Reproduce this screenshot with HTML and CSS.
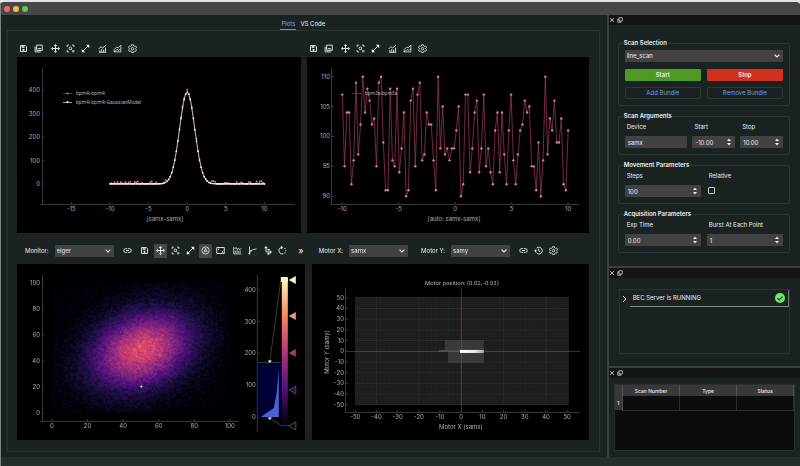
FILE: index.html
```
<!DOCTYPE html>
<html lang="en">
<head>
    <meta charset="utf-8">
    <meta name="viewport" content="width=device-width, initial-scale=1">
    <title>BEC</title>
    <link rel="stylesheet" href="styles.css">
</head>
<body>
<!-- Icon sprite -->
<svg class="sprite" aria-hidden="true">
    <symbol id="i-save" viewBox="0 0 24 24"><path d="M4 4h13l3 3v13H4z" fill="none" stroke="currentColor" stroke-width="2.4"/><path d="M7 6h8v4H7zM12 12.500a3 3 0 1 1 0 6 3 3 0 0 1 0-6z" fill="currentColor"/></symbol>
    <symbol id="i-copy" viewBox="0 0 24 24"><path d="M7 3h15v14H7zM3 7v14h15" fill="none" stroke="currentColor" stroke-width="2.400"/><path d="M10 11h9v3h-9z" fill="currentColor"/></symbol>
    <symbol id="i-move" viewBox="0 0 24 24"><path d="M12 4v16M4 12h16" stroke="currentColor" stroke-width="2.600"/><path d="M12 0l4.500 5h-9zM12 24l4.500-5h-9zM0 12l5-4.500v9zM24 12l-5-4.500v9z" fill="currentColor"/></symbol>
    <symbol id="i-focus" viewBox="0 0 24 24"><path d="M3 8V3h5M16 3h5v5M21 16v5h-5M8 21H3v-5M14 14l4 4" fill="none" stroke="currentColor" stroke-width="2.200"/><circle cx="11.500" cy="11.500" r="3.500" fill="none" stroke="currentColor" stroke-width="2.200"/></symbol>
    <symbol id="i-expand" viewBox="0 0 24 24"><path d="M5 19L19 5" stroke="currentColor" stroke-width="2.400"/><path d="M13 2h9v9zM2 13v9h9z" fill="currentColor"/></symbol>
    <symbol id="i-stats" viewBox="0 0 24 24"><path d="M2 13l6-6 4 4 9-8M3 22h19M5 21v-5M10 21v-7M15 21v-6M20 21V10" fill="none" stroke="currentColor" stroke-width="2.400"/></symbol>
    <symbol id="i-area" viewBox="0 0 24 24"><path d="M3 21V15l7-7 4 2 7-7v18zM3 21l8-6 4 2 6-4" fill="none" stroke="currentColor" stroke-width="2"/></symbol>
    <symbol id="i-gear" viewBox="0 0 24 24"><path d="M9.500 2h5l.6 3 2.200 1.300 3-1 2.400 4.300-2.300 2v1.800l2.300 2-2.400 4.300-3-1L15.100 20l-.6 3h-5l-.6-3-2.200-1.300-3 1-2.400-4.300 2.300-2v-1.800l-2.300-2 2.400-4.300 3 1L8.900 5z" fill="none" stroke="currentColor" stroke-width="2.200"/><circle cx="12" cy="12.500" r="3.300" fill="none" stroke="currentColor" stroke-width="2.200"/></symbol>
    <symbol id="i-link" viewBox="0 0 24 24"><path d="M11 7H7a5 5 0 0 0 0 10h4M13 7h4a5 5 0 0 1 0 10h-4M8 12h8" fill="none" stroke="currentColor" stroke-width="2.400"/></symbol>
    <symbol id="i-auto" viewBox="0 0 24 24"><circle cx="12" cy="12" r="9.500" fill="none" stroke="currentColor" stroke-width="2"/><path d="M8 17l4-11 4 11M9.500 13.500h5" fill="none" stroke="currentColor" stroke-width="2"/></symbol>
    <symbol id="i-aspect" viewBox="0 0 24 24"><path d="M2 4h20v16H2z" fill="none" stroke="currentColor" stroke-width="2.400"/><path d="M5 12V7h5zM19 12v5h-5z" fill="currentColor"/></symbol>
    <symbol id="i-fft" viewBox="0 0 24 24"><path d="M2 3v18h20M4 8l4-4 3 5 4-3 3 4 4-4M7 18v-5M11 18v-7M15 18v-4M19 18v-6" fill="none" stroke="currentColor" stroke-width="2.200"/></symbol>
    <symbol id="i-log" viewBox="0 0 24 24"><path d="M4 1v22M1 20h5M4 20c2-8 7-11 19-12M4 13h7" fill="none" stroke="currentColor" stroke-width="2.200"/></symbol>
    <symbol id="i-transpose" viewBox="0 0 24 24"><path d="M8 4v12h10" fill="none" stroke="currentColor" stroke-width="2.400"/><path d="M8 0l5 6H3zM24 16l-6-5v10zM12 8h6v4h-6zM12 18h5v5h-5z" fill="currentColor"/></symbol>
    <symbol id="i-rotate" viewBox="0 0 24 24"><path d="M9 4a8.500 8.500 0 1 0 5 16.500M9 0v8" fill="none" stroke="currentColor" stroke-width="2.400"/><path d="M9 0l5 4-5 4zM17 5h3v3h-3zM19 11h3v3h-3zM17 17h3v3h-3z" fill="currentColor"/></symbol>
    <symbol id="i-history" viewBox="0 0 24 24"><path d="M4 13a9 9 0 1 0 3-7.500M12.500 7v6l4 2" fill="none" stroke="currentColor" stroke-width="2.400"/><path d="M0 10h8l-4 5z" fill="currentColor"/></symbol>
    <symbol id="i-close" viewBox="0 0 24 24"><path d="M4 4l16 16M20 4L4 20" stroke="currentColor" stroke-width="3"/></symbol>
    <symbol id="i-float" viewBox="0 0 24 24"><path d="M8 3h13v13H8zM8 8H3v13h13v-5" fill="none" stroke="currentColor" stroke-width="2.600"/></symbol>
</svg>

<div class="window">
    <header class="titlebar">
        <span class="light red"></span>
        <span class="light yellow"></span>
        <span class="light green"></span>
    </header>

    <div class="workspace">
        <!-- Plots -->
        <main class="main">
            <nav class="tabs">
                <button class="tab active">Plots</button>
                <button class="tab">VS Code</button>
            </nav>
            <div class="pane">
                <div class="plot-row top">
                    <section class="plot">
                        <div class="toolbar">
                            <button class="tool" aria-label="Save"><svg><use href="#i-save"/></svg></button>
                            <button class="tool" aria-label="Copy"><svg><use href="#i-copy"/></svg></button>
                            <button class="tool sep" aria-label="Drag"><svg><use href="#i-move"/></svg></button>
                            <button class="tool" aria-label="Zoom"><svg><use href="#i-focus"/></svg></button>
                            <button class="tool" aria-label="Auto range"><svg><use href="#i-expand"/></svg></button>
                            <button class="tool sep" aria-label="Curves"><svg><use href="#i-stats"/></svg></button>
                            <button class="tool" aria-label="Fit"><svg><use href="#i-area"/></svg></button>
                            <button class="tool" aria-label="Settings"><svg><use href="#i-gear"/></svg></button>
                        </div>
                        <svg class="canvas" id="gauss" viewBox="0 0 284 176">
                            <path class="axis" d="M25.500 11V147.500M23 147.500H278"/>
                            <g class="data"></g>
                            <g class="legend">
                                <path class="pink" d="M46 36.500h9"/><circle class="pink-dot" cx="50.500" cy="36.500" r="1"/>
                                <path class="white" d="M46 45.500h9"/><circle class="white-dot" cx="50.500" cy="45" r="1"/>
                                <text x="59" y="38">bpm4i-bpm4i</text>
                                <text x="59" y="47">bpm4i-bpm4i-GaussianModel</text>
                            </g>
                            <text class="caption" x="148" y="164">[samx-samx]</text>
                        </svg>
                    </section>
                    <section class="plot">
                        <div class="toolbar">
                            <button class="tool" aria-label="Save"><svg><use href="#i-save"/></svg></button>
                            <button class="tool" aria-label="Copy"><svg><use href="#i-copy"/></svg></button>
                            <button class="tool sep" aria-label="Drag"><svg><use href="#i-move"/></svg></button>
                            <button class="tool" aria-label="Zoom"><svg><use href="#i-focus"/></svg></button>
                            <button class="tool" aria-label="Auto range"><svg><use href="#i-expand"/></svg></button>
                            <button class="tool sep" aria-label="Curves"><svg><use href="#i-stats"/></svg></button>
                            <button class="tool" aria-label="Fit"><svg><use href="#i-area"/></svg></button>
                            <button class="tool" aria-label="Settings"><svg><use href="#i-gear"/></svg></button>
                        </div>
                        <svg class="canvas" id="noise" viewBox="0 0 282 176">
                            <path class="axis" d="M24.500 11V147.500M23 147.500H272"/>
                            <g class="data"></g>
                            <g class="legend">
                                <path class="pink" d="M45 36.500h9"/>
                                <text x="58" y="38">bpm3a-bpm3a</text>
                            </g>
                            <text class="caption" x="147" y="164">[auto: samx-samx]</text>
                        </svg>
                    </section>
                </div>

                <div class="plot-row bottom">
                    <section class="plot">
                        <div class="toolbar">
                            <label class="tool-label" for="monitor">Monitor:</label>
                            <select id="monitor" class="combo"><option>eiger</option></select>
                            <button class="tool sep" aria-label="Connect"><svg><use href="#i-link"/></svg></button>
                            <button class="tool sep" aria-label="Save"><svg><use href="#i-save"/></svg></button>
                            <button class="tool sep on" aria-label="Drag"><svg><use href="#i-move"/></svg></button>
                            <button class="tool" aria-label="Zoom"><svg><use href="#i-focus"/></svg></button>
                            <button class="tool" aria-label="Auto range"><svg><use href="#i-expand"/></svg></button>
                            <button class="tool on" aria-label="Auto levels"><svg><use href="#i-auto"/></svg></button>
                            <button class="tool" aria-label="Lock aspect"><svg><use href="#i-aspect"/></svg></button>
                            <button class="tool sep" aria-label="FFT"><svg><use href="#i-fft"/></svg></button>
                            <button class="tool" aria-label="Log scale"><svg><use href="#i-log"/></svg></button>
                            <button class="tool" aria-label="Transpose"><svg><use href="#i-transpose"/></svg></button>
                            <button class="tool" aria-label="Rotate"><svg><use href="#i-rotate"/></svg></button>
                            <button class="tool more" aria-label="More">»</button>
                        </div>
                        <svg class="canvas" id="image" viewBox="0 0 288 176">
                            <defs>
                                <linearGradient id="magma" x1="0" y1="0" x2="0" y2="1">
                                    <stop offset="0" stop-color="#fcfdbf"/>
                                    <stop offset=".25" stop-color="#fc8961"/>
                                    <stop offset=".5" stop-color="#b73779"/>
                                    <stop offset=".75" stop-color="#51127c"/>
                                    <stop offset="1" stop-color="#000004"/>
                                </linearGradient>
                            </defs>
                            <foreignObject x="35" y="19" width="178" height="130"><canvas id="heatmap" class="heatmap" width="100" height="100"></canvas></foreignObject>
                            <circle cx="124.500" cy="122.500" r="1" fill="#fff"/>
                            <path class="axis" d="M25.500 11V157.500M23 157.500H222M240.500 11V168"/>
                            <g class="data"></g>
                            <!-- Histogram and level handles -->
                            <path d="M241 98h23v55h-23z" fill="#000038"/>
                            <path d="M241 98.500h23" stroke="#33413c"/>
                            <path d="M244 153l7-5 6-4 3-16 2-24v49z" fill="#4f5fd6"/>
                            <path d="M253 97l11-81" stroke="#6b6644" stroke-width=".6"/>
                            <path d="M253 154l11 7.500h8" stroke="#686b4d" stroke-width=".6" fill="none"/>
                            <path d="M251 96.500h4l-2 2.500zM251 153.500h4l-2 2.500z" fill="#fff"/>
                            <path d="M265 14h6v147h-6z" fill="url(#magma)"/>
                            <path d="M264 13h7v5h-7z" fill="#fbf8c4"/>
                            <path d="M279 12v8l-7-4z" fill="#fcf6bd"/>
                            <path d="M279 48v8l-7-4z" fill="#ef9a78"/>
                            <path d="M279 85v8l-7-4z" fill="#a63d6e"/>
                            <path d="M279 122v8l-7-4z" fill="#2e1248" stroke="#69508a" stroke-width=".7"/>
                            <path d="M279 158v8l-7-4z" fill="#000" stroke="#777" stroke-width=".7"/>
                        </svg>
                    </section>
                    <section class="plot">
                        <div class="toolbar motors">
                            <label class="tool-label" for="motor-x">Motor X:</label>
                            <select id="motor-x" class="combo"><option>samx</option></select>
                            <label class="tool-label second" for="motor-y">Motor Y:</label>
                            <select id="motor-y" class="combo"><option>samy</option></select>
                            <button class="tool sep" aria-label="Connect"><svg><use href="#i-link"/></svg></button>
                            <button class="tool" aria-label="History"><svg><use href="#i-history"/></svg></button>
                            <button class="tool" aria-label="Settings"><svg><use href="#i-gear"/></svg></button>
                        </div>
                        <svg class="canvas" id="motor" viewBox="0 0 277 176">
                            <defs>
                                <linearGradient id="trace"><stop offset="0" stop-color="#fff"/><stop offset=".6" stop-color="#eee"/><stop offset="1" stop-color="#aaa"/></linearGradient>
                            </defs>
                            <path d="M43 33h214v108H43z" fill="#1b1c1c"/>
                            <g class="grid"></g>
                            <path d="M133 76h39v23h-36V88h-3z" fill="#3c403f" opacity=".85"/>
                            <path d="M127 86h22v2h-22z" fill="#4b4b4b"/>
                            <path class="cross" d="M149.500 25V148M33 87.500H268"/>
                            <path d="M148 86h24v3h-24z" fill="url(#trace)"/>
                            <path class="axis" d="M33.500 25V148.500M33 148.500H268"/>
                            <g class="data"></g>
                            <text class="title" x="150" y="21">Motor position: (0.02, -0.03)</text>
                            <text class="caption" x="149" y="165">Motor X (samx)</text>
                            <text class="caption" transform="translate(17 88) rotate(-90)">Motor Y (samy)</text>
                        </svg>
                    </section>
                </div>
            </div>
        </main>

        <!-- Docks -->
        <aside class="docks">
            <section class="dock">
                <div class="dock-bar">
                    <button class="dock-btn" aria-label="Close"><svg><use href="#i-close"/></svg></button>
                    <button class="dock-btn" aria-label="Float"><svg><use href="#i-float"/></svg></button>
                </div>
                <form class="scan">
                    <fieldset>
                        <legend>Scan Selection</legend>
                        <select class="combo wide" aria-label="Scan"><option>line_scan</option></select>
                        <div class="pair actions">
                            <button type="button" class="btn start">Start</button>
                            <button type="button" class="btn stop">Stop</button>
                        </div>
                        <div class="pair bundle">
                            <button type="button" class="btn outline">Add Bundle</button>
                            <button type="button" class="btn outline">Remove Bundle</button>
                        </div>
                    </fieldset>
                    <fieldset>
                        <legend>Scan Arguments</legend>
                        <div class="args">
                            <div class="field"><label for="device">Device</label><input id="device" type="text" value="samx"></div>
                            <div class="field"><label for="start">Start</label><input id="start" type="number" step="0.01" value="-10.00"></div>
                            <div class="field"><label for="stop">Stop</label><input id="stop" type="number" step="0.01" value="10.00"></div>
                        </div>
                    </fieldset>
                    <fieldset>
                        <legend>Movement Parameters</legend>
                        <div class="pair">
                            <div class="field"><label for="steps">Steps</label><input id="steps" type="number" value="100"></div>
                            <div class="field"><label for="relative">Relative</label><input id="relative" type="checkbox"></div>
                        </div>
                    </fieldset>
                    <fieldset>
                        <legend>Acquisition Parameters</legend>
                        <div class="pair">
                            <div class="field"><label for="exp">Exp Time</label><input id="exp" type="number" step="0.01" value="0.00"></div>
                            <div class="field"><label for="burst">Burst At Each Point</label><input id="burst" type="number" value="1"></div>
                        </div>
                    </fieldset>
                </form>
            </section>

            <section class="dock">
                <div class="dock-bar">
                    <button class="dock-btn" aria-label="Close"><svg><use href="#i-close"/></svg></button>
                    <button class="dock-btn" aria-label="Float"><svg><use href="#i-float"/></svg></button>
                </div>
                <div class="status-list">
                    <div class="status-item">
                        <svg class="chevron" viewBox="0 0 6 8"><path d="M1 1l3 3-3 3"/></svg>
                        <div class="status-text">
                            <span>BEC Server is RUNNING</span>
                            <svg class="check" viewBox="0 0 24 24"><circle cx="12" cy="12" r="12" fill="#6ee86a"/><path d="M6 12.500l4 4 8-8" fill="none" stroke="#14301a" stroke-width="2.600"/></svg>
                        </div>
                    </div>
                </div>
            </section>

            <section class="dock last">
                <div class="dock-bar">
                    <button class="dock-btn" aria-label="Close"><svg><use href="#i-close"/></svg></button>
                    <button class="dock-btn" aria-label="Float"><svg><use href="#i-float"/></svg></button>
                </div>
                <div class="queue">
                    <table>
                        <thead>
                            <tr><th class="num"></th><th>Scan Number</th><th>Type</th><th>Status</th></tr>
                        </thead>
                        <tbody>
                            <tr><th class="num">1</th><td></td><td></td><td></td></tr>
                        </tbody>
                    </table>
                </div>
            </section>
        </aside>
    </div>
    <footer class="statusbar"></footer>
</div>

<script src="plots.js"></script>
</body>
</html>
```
FILE: styles.css
```
* {
    box-sizing: border-box;
}
body {
    margin: 0;
    background: #dfe3e4;
    font-family: Inter, "Liberation Sans", sans-serif;
    font-size: 6px;
    line-height: 8px;
    color: #eceeee;
}
button, input, select {
    font: inherit;
    color: inherit;
    margin: 0;
}
button {
    padding: 0;
    border: none;
    background: none;
    cursor: pointer;
}
.sprite {
    display: none;
}

/* Window */
.window {
    min-height: 100vh;
    display: flex;
    flex-direction: column;
    background: #1b2222;
    border-top: 2px solid #dfe3e4;
    border-left: 1px solid #7b8484;
    border-radius: 5px 5px 0 0;
    overflow: hidden;
}
.titlebar {
    display: flex;
    align-items: center;
    gap: 3px;
    height: 13px;
    padding-left: 3px;
    background: #474747;
}
.light {
    width: 6px;
    height: 6px;
    border-radius: 50%;
}
.light.red { background: #ee6a5f; }
.light.yellow { background: #f5bd4f; }
.light.green { background: #61c454; }
.workspace {
    flex: 1;
    display: flex;
}
.statusbar {
    height: 9px;
    background: #242c2c;
}

/* Tabs */
.main {
    flex: 1;
    padding: 5px 7px 5px 6px;
}
.tabs {
    display: flex;
    justify-content: center;
    gap: 3px;
}
.tab {
    padding: 0 1px 1px;
    border-bottom: 1px solid transparent;
}
.tab.active {
    color: #7aa7e8;
    border-bottom-color: #6d95cf;
}
.pane {
    border: 1px solid #2a3333;
    padding: 10px 10px 11px 9px;
}

/* Plots */
.plot-row {
    display: grid;
}
.plot-row.top {
    grid-template-columns: 284fr 282fr;
    gap: 6px;
}
.plot-row.bottom {
    grid-template-columns: 288fr 277fr;
    gap: 7px;
    margin-top: 11px;
}
.toolbar {
    display: flex;
    align-items: center;
    gap: 2px;
    height: 14px;
    margin-bottom: 2px;
}
.bottom .toolbar {
    margin-bottom: 6px;
    padding-left: 8px;
}
.bottom .motors {
    padding-left: 7px;
}
.tool {
    display: flex;
    align-items: center;
    justify-content: center;
    width: 13px;
    height: 14px;
    color: #eceeee;
}
.tool svg {
    width: 9px;
    height: 9px;
}
.tool.sep {
    margin-left: 2px;
}
.tool.sep.on {
    margin-left: 1px;
}
.tool.on {
    background: #46494a;
    border-radius: 1px;
}
.tool.more {
    margin-left: auto;
    width: 8px;
    font-size: 9px;
}
.tool-label {
    margin-right: 4px;
}
.tool-label.second {
    margin-left: 8px;
}
.combo {
    appearance: none;
    width: 59px;
    height: 12px;
    margin-right: 3px;
    padding: 0 2px;
    border: none;
    border-radius: 1px;
    background: #404243 url("data:image/svg+xml,%3Csvg xmlns='http://www.w3.org/2000/svg' viewBox='0 0 6 4'%3E%3Cpath d='M.6.6L3 3 5.400.6' fill='none' stroke='%23eee' stroke-width='1.100'/%3E%3C/svg%3E") no-repeat right 3px center / 6px 4px;
}
.combo.wide {
    display: block;
    width: 100%;
    margin: 0;
}
.canvas {
    display: block;
    width: 100%;
    height: auto;
    background: #000;
}
.heatmap {
    display: block;
    width: 178px;
    height: 130px;
}
.canvas text {
    font-size: 6px;
    fill: #adadad;
}
.canvas .legend text {
    font-family: Roboto, sans-serif;
    font-size: 5px;
}
.canvas .title {
    font-family: Roboto, sans-serif;
    text-anchor: middle;
}
.canvas .caption, .canvas .tick-x {
    text-anchor: middle;
}
.canvas .tick-y {
    text-anchor: end;
}
.axis {
    fill: none;
    stroke: #3c3c3c;
}
.pink, .white {
    fill: none;
    stroke: #a63a63;
    stroke-width: .7;
}
.white {
    stroke: #eee;
}
.pink-dot {
    fill: #d0809b;
}
.white-dot {
    fill: #fff;
}
.cross {
    stroke: #b4392f;
    stroke-width: .6;
}
.minor, .major {
    stroke: #252727;
    stroke-width: .5;
}
.major {
    stroke: #363838;
}

/* Docks */
.docks {
    display: flex;
    flex-direction: column;
    width: 24.200%;
    border-left: 2px solid #3a4141;
}
.dock {
    border-bottom: 2px solid #3a4141;
}
.dock.last {
    flex: 1;
    display: flex;
    flex-direction: column;
    border-bottom: none;
}
.dock-bar {
    display: flex;
    align-items: center;
    gap: 2px;
    height: 10px;
    background: #121416;
}
.dock-btn {
    display: flex;
    width: 6px;
    height: 6px;
}
.dock-btn svg {
    width: 6px;
    height: 6px;
}

/* Scan form */
.scan {
    display: grid;
    gap: 6px;
    padding: 14px 10px 13px 9px;
}
fieldset {
    min-width: 0;
    margin: 0;
    padding: 3px 6px 6px;
    border: 1px solid #2d3636;
    border-radius: 2px;
}
legend {
    margin-left: -2px;
    padding: 0 1px;
    font-weight: 600;
}
.pair {
    display: grid;
    grid-template-columns: 1fr 1fr;
    gap: 6px;
}
.pair.actions {
    margin: 7px 0 6px;
}
.args {
    display: grid;
    grid-template-columns: 63fr 43fr 43fr;
    gap: 5px;
}
.field {
    display: flex;
    flex-direction: column;
    gap: 5px;
}
.field label {
    padding-left: 2px;
}
.field input {
    appearance: none;
    width: 100%;
    height: 12px;
    padding: 0 3px;
    border: none;
    border-radius: 1px;
    background: #404243;
}
.field input[type="number"] {
    background: #404243 url("data:image/svg+xml,%3Csvg xmlns='http://www.w3.org/2000/svg' viewBox='0 0 4 8'%3E%3Cpath d='M0 3L2 .5 4 3zM0 5h4L2 7.500z' fill='%23eee'/%3E%3C/svg%3E") no-repeat right 4px center / 4px 8px;
}
.field input::-webkit-inner-spin-button {
    appearance: none;
}
.field input[type="checkbox"] {
    width: 7px;
    height: 7px;
    margin: 2px 0 0 1px;
    padding: 0;
    border: 1px solid #c9cccc;
    background: none;
}
.btn {
    height: 12px;
    border-radius: 1px;
}
.btn.start {
    background: #4e9a22;
    font-weight: 600;
}
.btn.stop {
    background: #d0301c;
    font-weight: 600;
}
.btn.outline {
    border: 1px solid #2f3839;
    color: #6f9fdc;
}

/* Service status */
.status-list {
    min-height: 65px;
    margin: 11px 10px 12px 10px;
    border: 1px solid #2a3333;
}
.status-item {
    display: flex;
    align-items: center;
}
.chevron {
    width: 6px;
    height: 8px;
    margin-left: 2px;
    fill: none;
    stroke: #e4e6e6;
}
.status-text {
    flex: 1;
    display: flex;
    align-items: center;
    justify-content: space-between;
    height: 17px;
    margin-left: 2px;
    padding: 0 3px;
    border-right: 1px solid #6c776f;
    border-bottom: 1px solid #7f8c82;
}
.check {
    width: 10px;
    height: 10px;
}

/* Scan queue */
.queue {
    flex: 1;
    margin: 6px 5px;
    background: #0b0c10;
    border: 1px solid #2a2f30;
}
.queue table {
    width: 100%;
    table-layout: fixed;
    border-collapse: collapse;
}
.queue th {
    height: 11px;
    padding: 0;
    background: #37383a;
    border-right: 1px solid #505254;
    font-size: 5px;
    font-weight: 500;
}
.queue td {
    height: 14px;
    border-right: 1px solid #2b2d30;
    border-bottom: 1px solid #2b2d30;
}
.queue .num {
    width: 8px;
}
```
FILE: plots.js
```
const NS = 'http://www.w3.org/2000/svg';

function add(parent, tag, attrs, text) {
    const el = document.createElementNS(NS, tag);
    for (const key in attrs) el.setAttribute(key, attrs[key]);
    if (text !== undefined) el.textContent = text;
    parent.appendChild(el);
    return el;
}

function ticksX(id, values, scale, y) {
    const g = document.querySelector(id + ' .data');
    values.forEach(v => {
        add(g, 'text', { class: 'tick-x', x: scale(v), y: y + 7 }, v);
        add(g, 'path', { class: 'axis', d: `M${scale(v)} ${y - 2}v2` });
    });
}

function ticksY(id, values, scale, x) {
    const g = document.querySelector(id + ' .data');
    values.forEach(v => {
        add(g, 'text', { class: 'tick-y', x: x - 2, y: scale(v) + 2 }, v);
        add(g, 'path', { class: 'axis', d: `M${x} ${scale(v)}h2` });
    });
}

function curve(id, points, name, r) {
    const g = document.querySelector(id + ' .data');
    add(g, 'polyline', { class: name, points: points.map(p => p.join()).join(' ') });
    points.forEach(p => add(g, 'circle', { class: name + '-dot', cx: p[0], cy: p[1], r: r }));
}

// Seeded generator, so the noise is the same on every load
let seed = 7;
function random() {
    seed = (seed * 16807) % 2147483647;
    return seed / 2147483647;
}

// bpm4i with its Gaussian fit
const gx = v => 170.3 + v * 7.73;
const gy = v => 127 - v * 0.234;
const measured = [];
const fit = [];
for (let i = 0; i <= 100; i++) {
    const x = -10 + i * 0.2;
    const y = 392 * Math.exp(-x * x / 1.9);
    fit.push([gx(x), gy(y)]);
    measured.push([gx(x), gy(y + (random() > 0.55 ? random() * 12 : 0))]);
}
curve('#gauss', measured, 'pink', 0.9);
curve('#gauss', fit, 'white', 0.8);
ticksX('#gauss', [-15, -10, -5, 0, 5, 10], gx, 147);
ticksY('#gauss', [0, 100, 200, 300, 400], gy, 25);

// bpm3a
const bpm3a = [
    107, 95, 104, 104, 92, 96, 109, 97, 102, 110, 104, 108, 106, 102, 103, 95, 109, 110, 99, 91,
    91, 108, 96, 95, 108, 94, 98, 104, 90, 91, 106, 108, 95, 107, 109, 96, 97, 104, 102, 102,
    96, 91, 110, 98, 105, 97, 98, 96, 98, 98, 101, 105, 90, 92, 107, 107, 94, 98, 104, 106,
    94, 98, 107, 95, 98, 94, 92, 101, 104, 94, 104, 97, 92, 101, 107, 96, 92, 97, 101, 102,
    106, 104, 105, 95, 95, 91, 99, 90, 96, 110, 97, 103, 101, 106, 99, 99, 103, 92, 91, 101
];
const nx = v => 148.3 + v * 11.3;
const ny = v => 139.3 - (v - 90) * 5.98;
curve('#noise', bpm3a.map((v, i) => [nx(-10 + i * 20 / 99), ny(v)]), 'pink', 1.2);
ticksX('#noise', [-10, -5, 0, 5, 10], nx, 147);
ticksY('#noise', [90, 95, 100, 105, 110], ny, 25);

// Detector image
const MAGMA = [[0, 0, 4], [28, 16, 68], [79, 18, 123], [129, 37, 129], [181, 54, 122], [229, 80, 100], [251, 135, 97], [254, 194, 135], [252, 253, 191]];
function magma(t) {
    const p = Math.max(0, Math.min(0.999, t)) * 8;
    const i = Math.floor(p);
    return MAGMA[i].map((c, k) => c + (MAGMA[i + 1][k] - c) * (p - i));
}
const ctx = document.getElementById('heatmap').getContext('2d');
const img = ctx.createImageData(100, 100);
for (let y = 0; y < 100; y++) {
    for (let x = 0; x < 100; x++) {
        const u = (x - 50) / 18;
        const v = (51 - y) / 19;
        const level = 0.6 * Math.exp(-(u * u + v * v - 0.5 * u * v) / 2);
        const noise = (random() + random() - 1) * (0.03 + 0.12 * Math.sqrt(level));
        img.data.set([...magma(level + noise), 255], (y * 100 + x) * 4);
    }
}
ctx.putImageData(img, 0, 0);
ticksX('#image', [0, 20, 40, 60, 80, 100], v => 35 + v * 1.78, 157);
ticksY('#image', [0, 20, 40, 60, 80, 100], v => 149 - v * 1.3, 25);
ticksY('#image', [0, 100, 200, 300, 400], v => 153 - v * 0.318, 241);

// Motor map
const mx = v => 149.3 + v * 2.12;
const my = v => 87.3 - v * 1.07;
const grid = document.querySelector('#motor .grid');
for (let v = -50; v <= 50; v += 2) {
    add(grid, 'path', { class: v % 20 === 0 ? 'major' : 'minor', d: `M${mx(v)} 33V141` });
    add(grid, 'path', { class: v % 10 === 0 ? 'major' : 'minor', d: `M43 ${my(v)}H257` });
}
const range = [-50, -40, -30, -20, -10, 0, 10, 20, 30, 40, 50];
ticksX('#motor', range, mx, 148);
ticksY('#motor', range, my, 34);
```
